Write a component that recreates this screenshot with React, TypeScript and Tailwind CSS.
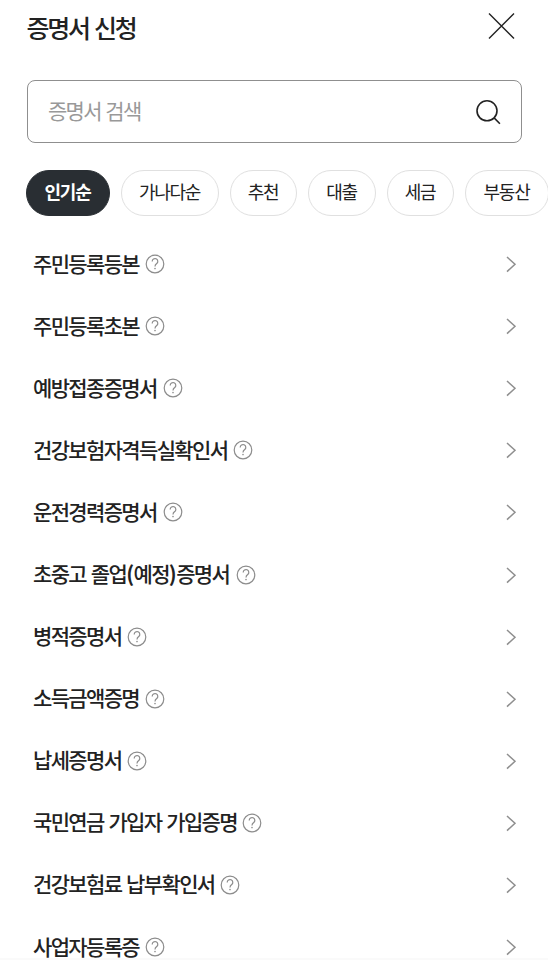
import { useState } from 'react';

const tabs = [
  { label: '인기순', width: 'w-[84px]' },
  { label: '가나다순', width: 'w-[98px]' },
  { label: '추천', width: 'w-[67px]' },
  { label: '대출', width: 'w-[68px]' },
  { label: '세금', width: 'w-[67px]' },
  { label: '부동산', width: 'w-[84px]' },
];

const certificates = [
  { name: '주민등록등본', width: 'w-[106px]' },
  { name: '주민등록초본', width: 'w-[106px]' },
  { name: '예방접종증명서', width: 'w-[124px]' },
  { name: '건강보험자격득실확인서', width: 'w-[194px]' },
  { name: '운전경력증명서', width: 'w-[124px]' },
  { name: '초중고 졸업(예정)증명서', width: 'w-[197px]' },
  { name: '병적증명서', width: 'w-[88px]' },
  { name: '소득금액증명', width: 'w-[106px]' },
  { name: '납세증명서', width: 'w-[88px]' },
  { name: '국민연금 가입자 가입증명', width: 'w-[203px]' },
  { name: '건강보험료 납부확인서', width: 'w-[181px]' },
  { name: '사업자등록증', width: 'w-[106px]' },
];

function HelpIcon() {
  return (
    <svg className="w-5 h-5 shrink-0" viewBox="0 0 20 20" fill="none" stroke="#8c8c8c" strokeWidth="1.2">
      <circle cx="10" cy="10" r="8.8" />
      <path d="M7.2 7.4a2.8 2.8 0 1 1 4.6 2.1C10.6 10.4 10 10.8 10 12.5" />
      <circle cx="10" cy="14.6" r="0.8" fill="#8c8c8c" stroke="none" />
    </svg>
  );
}

function SearchIcon() {
  return (
    <svg className="w-7 h-7" viewBox="0 0 28 28" fill="none" stroke="#222" strokeWidth="1.6">
      <circle cx="13" cy="12.8" r="10" />
      <path d="m20.1 19.9 5.8 5.8" />
    </svg>
  );
}

function ArrowIcon() {
  return (
    <svg className="ml-auto w-6 h-6" viewBox="0 0 24 24" fill="none" stroke="#8f8f8f" strokeWidth="1.5">
      <path d="m8 5 8 7.3L8 19.6" />
    </svg>
  );
}

export default function App() {
  const [activeTab, setActiveTab] = useState('인기순');
  const [query, setQuery] = useState('');

  return (
    <div className="h-[960px] w-[548px] overflow-hidden border-b-2 border-[#fafafa] bg-white text-[#222] font-['Noto_Sans_CJK_KR',sans-serif]">
      <header className="flex h-[80px] items-start justify-between pl-[26.5px] pr-[33px]">
        <h1 className="mt-[8.5px] text-[25px] leading-[36px] font-medium tracking-[-2.2px] [word-spacing:1.7px] whitespace-nowrap">
          증명서 신청
        </h1>
        <button aria-label="닫기" className="mt-[13px]">
          <svg className="w-[27px] h-[27px]" viewBox="0 0 27 27" stroke="#222" strokeWidth="1.4">
            <path d="M1 .5 26 25.5M26 .5 1 25.5" />
          </svg>
        </button>
      </header>

      <label className="ml-[26.5px] flex h-[63px] w-[495px] items-center rounded-[8px] border border-[#8f8f8f] pl-[20.5px] pr-[18.5px]">
        <input
          value={query}
          onChange={(e) => setQuery(e.target.value)}
          placeholder="증명서 검색"
          className="min-w-0 flex-1 pb-px text-[21px] tracking-[-1.75px] [word-spacing:1.7px] outline-none placeholder:text-[#999]"
        />
        <SearchIcon />
      </label>

      <nav className="mt-[27px] flex gap-[11px] pl-[26px]">
        {tabs.map((tab) => (
          <button
            key={tab.label}
            onClick={() => setActiveTab(tab.label)}
            className={`${tab.width} h-[46px] shrink-0 rounded-full border pr-px pb-[3px] text-[18px] tracking-[-1.3px] whitespace-nowrap ${
              activeTab === tab.label
                ? 'border-[#292e33] bg-[#292e33] font-bold text-white'
                : 'border-[#e0e0e0] bg-white'
            }`}
          >
            {tab.label}
          </button>
        ))}
      </nav>

      <ul className="mt-[17px]">
        {certificates.map((item) => (
          <li key={item.name} className="flex h-[62.1px] items-center pl-[33px] pr-[25px]">
            <span
              className={`${item.width} shrink-0 pb-[1.5px] text-[21px] font-medium tracking-[-1.65px] [word-spacing:1.7px] whitespace-nowrap`}
            >
              {item.name.split(/([()])/).map((part, i) =>
                part === '(' || part === ')' ? (
                  <span key={i} className="tracking-[-0.6px] font-bold">{part}</span>
                ) : (
                  part
                )
              )}
            </span>
            <button aria-label="도움말" className="ml-[6px]">
              <HelpIcon />
            </button>
            <ArrowIcon />
          </li>
        ))}
      </ul>
    </div>
  );
}
